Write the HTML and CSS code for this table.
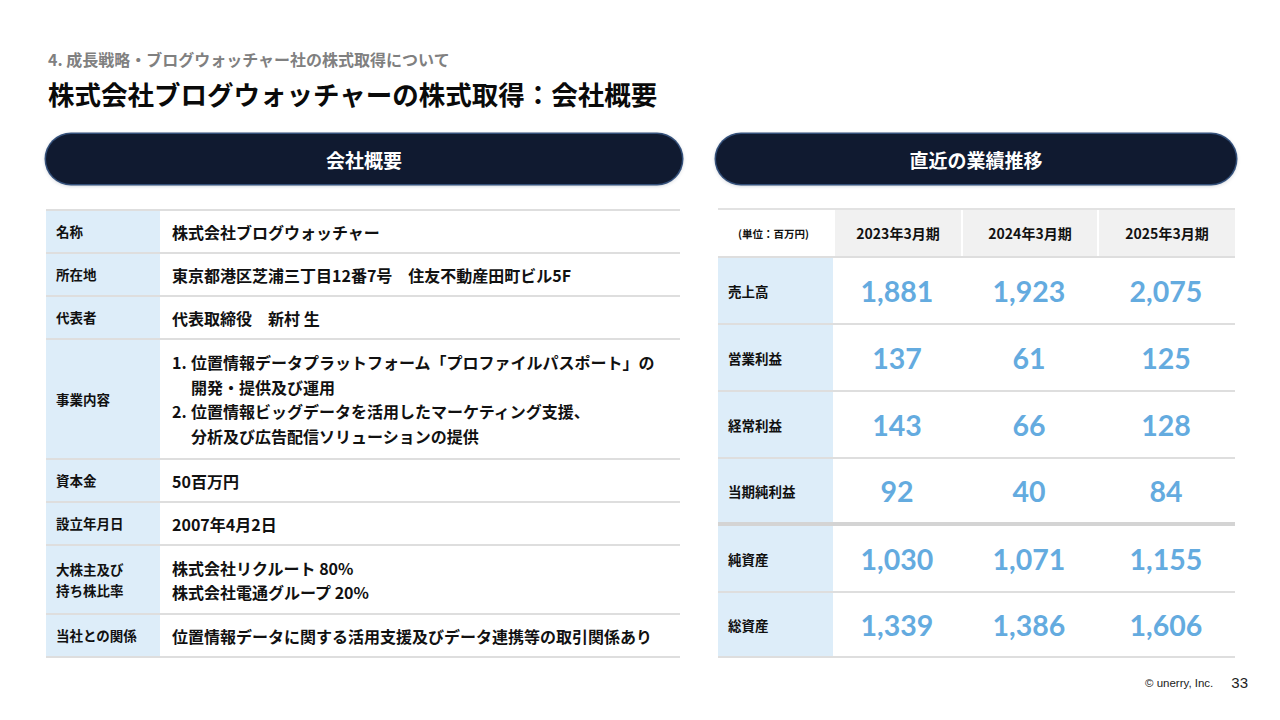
FILE: index.html
```html
<!DOCTYPE html>
<html lang="ja">
<head>
<meta charset="utf-8">
<link rel="stylesheet" href="styles.css">
</head>
<body>
<div class="page">
  <header class="head">
    <div class="sub">4. 成長戦略・ブログウォッチャー社の株式取得について</div>
    <h1 class="title">株式会社ブログウォッチャーの株式取得：会社概要</h1>
  </header>
  <main class="cols">
    <section class="col left">
      <div class="pill">会社概要</div>
      <div class="info">
        <div class="row"><div class="lab">名称</div><div class="val">株式会社ブログウォッチャー</div></div>
        <div class="row"><div class="lab">所在地</div><div class="val">東京都港区芝浦三丁目12番7号　住友不動産田町ビル5F</div></div>
        <div class="row"><div class="lab">代表者</div><div class="val">代表取締役　新村 生</div></div>
        <div class="row"><div class="lab">事業内容</div><div class="val multi">
          <div class="li"><span class="num">1.</span><span>位置情報データプラットフォーム「プロファイルパスポート」の<br>開発・提供及び運用</span></div>
          <div class="li"><span class="num">2.</span><span>位置情報ビッグデータを活用したマーケティング支援、<br>分析及び広告配信ソリューションの提供</span></div>
        </div></div>
        <div class="row"><div class="lab">資本金</div><div class="val">50百万円</div></div>
        <div class="row"><div class="lab">設立年月日</div><div class="val">2007年4月2日</div></div>
        <div class="row"><div class="lab">大株主及び<br>持ち株比率</div><div class="val two">株式会社リクルート 80%<br>株式会社電通グループ 20%</div></div>
        <div class="row"><div class="lab">当社との関係</div><div class="val">位置情報データに関する活用支援及びデータ連携等の取引関係あり</div></div>
      </div>
    </section>
    <section class="col right">
      <div class="pill">直近の業績推移</div>
      <div class="perf">
        <div class="hrow">
          <div class="unit">(単位：百万円)</div>
          <div class="yh">2023年3月期</div>
          <div class="yh">2024年3月期</div>
          <div class="yh">2025年3月期</div>
        </div>
        <div class="drow"><div class="dl">売上高</div><div class="n">1,881</div><div class="n">1,923</div><div class="n">2,075</div></div>
        <div class="drow"><div class="dl">営業利益</div><div class="n">137</div><div class="n">61</div><div class="n">125</div></div>
        <div class="drow"><div class="dl">経常利益</div><div class="n">143</div><div class="n">66</div><div class="n">128</div></div>
        <div class="drow thick"><div class="dl">当期純利益</div><div class="n">92</div><div class="n">40</div><div class="n">84</div></div>
        <div class="drow after"><div class="dl">純資産</div><div class="n">1,030</div><div class="n">1,071</div><div class="n">1,155</div></div>
        <div class="drow last"><div class="dl">総資産</div><div class="n">1,339</div><div class="n">1,386</div><div class="n">1,606</div></div>
      </div>
    </section>
  </main>
  <footer class="foot">
    <span class="copy">© unerry, Inc.</span>
    <span class="pg">33</span>
  </footer>
</div>
</body>
</html>
```
FILE: styles.css
```css
* { box-sizing: border-box; margin: 0; padding: 0; }
html, body { width: 1280px; height: 720px; background: #fff; }
body {
  font-family: "Noto Sans CJK JP", "Noto Sans", sans-serif;
  color: #111;
  overflow: hidden;
}
.page {
  width: 1280px;
  height: 720px;
  padding: 48px 0 0 46px;
  display: flex;
  flex-direction: column;
}
.head { padding-left: 2px; }
.sub {
  font-size: 16px;
  line-height: 22px;
  font-weight: 700;
  color: #808080;
}
.title {
  margin-top: 6px;
  font-size: 26.5px;
  line-height: 36px;
  font-weight: 700;
  color: #0a0a0a;
}
.cols {
  margin-top: 22px;
  display: flex;
  gap: 34px;
}
.col { display: flex; flex-direction: column; }
.left { width: 636px; }
.right { width: 520px; }
.pill {
  height: 50px;
  border-radius: 25px;
  background: #101a30;
  color: #fff;
  font-size: 19px;
  font-weight: 700;
  display: flex;
  align-items: center;
  justify-content: center;
  box-shadow: 0 0 0 1.5px #34507a, 0 1px 4px rgba(20, 40, 70, 0.35);
}
.info {
  margin-top: 25px;
  width: 634px;
  border-top: 2px solid #dedede;
}
.row {
  display: flex;
  border-bottom: 2px solid #dedede;
  min-height: 43px;
}
.lab {
  width: 114px;
  flex: none;
  background: #ddedf9;
  padding-left: 10px;
  font-size: 13.5px;
  font-weight: 700;
  line-height: 21px;
  display: flex;
  align-items: center;
}
.val {
  padding: 8.5px 0 8.5px 12px;
  font-size: 16px;
  line-height: 24px;
  font-weight: 700;
  display: flex;
  flex-direction: column;
  justify-content: center;
}
.val.multi { padding-top: 10px; padding-bottom: 10px; line-height: 24.5px; }
.val.two { padding-top: 9.5px; padding-bottom: 9.5px; }
.li { display: flex; }
.num { width: 19px; flex: none; }
.perf {
  margin-top: 24px;
  width: 517px;
  margin-left: 2px;
  border-top: 2px solid #e2e2e2;
}
.hrow, .drow {
  display: grid;
  grid-template-columns: 115px 128px 136px 138px;
}
.hrow { height: 46px; }
.unit {
  font-size: 10.5px;
  font-weight: 700;
  display: flex;
  align-items: center;
  justify-content: center;
  padding-right: 4px;
}
.yh {
  background: #f1f1f1;
  border-left: 2px solid #fff;
  font-size: 14px;
  font-weight: 700;
  display: flex;
  align-items: center;
  justify-content: center;
}
.drow {
  height: 67px;
  border-top: 2px solid #dedede;
}
.drow.thick { border-bottom: 4px solid #d4d4d4; height: 69px; }
.drow.after { height: 65px; border-top: none; }
.drow.last { border-bottom: 2px solid #dedede; height: 67px; }
.dl {
  background: #ddedf9;
  padding-left: 10px;
  font-size: 13.5px;
  font-weight: 700;
  display: flex;
  align-items: center;
}
.n {
  font-family: "Lato", "Noto Sans", sans-serif;
  font-weight: 700;
  font-size: 28.5px;
  color: #64abdf;
  display: flex;
  align-items: center;
  justify-content: center;
}
.foot {
  margin-top: auto;
  height: 70px;
  display: flex;
  align-items: flex-start;
  justify-content: flex-end;
  padding-right: 32px;
  gap: 18px;
  padding-top: 15px;
}
.copy {
  font-family: "Liberation Sans", sans-serif;
  font-size: 11.5px;
  line-height: 20px;
  color: #222;
}
.pg {
  font-family: "Liberation Sans", sans-serif;
  font-size: 15px;
  line-height: 20px;
  color: #222;
}
```
